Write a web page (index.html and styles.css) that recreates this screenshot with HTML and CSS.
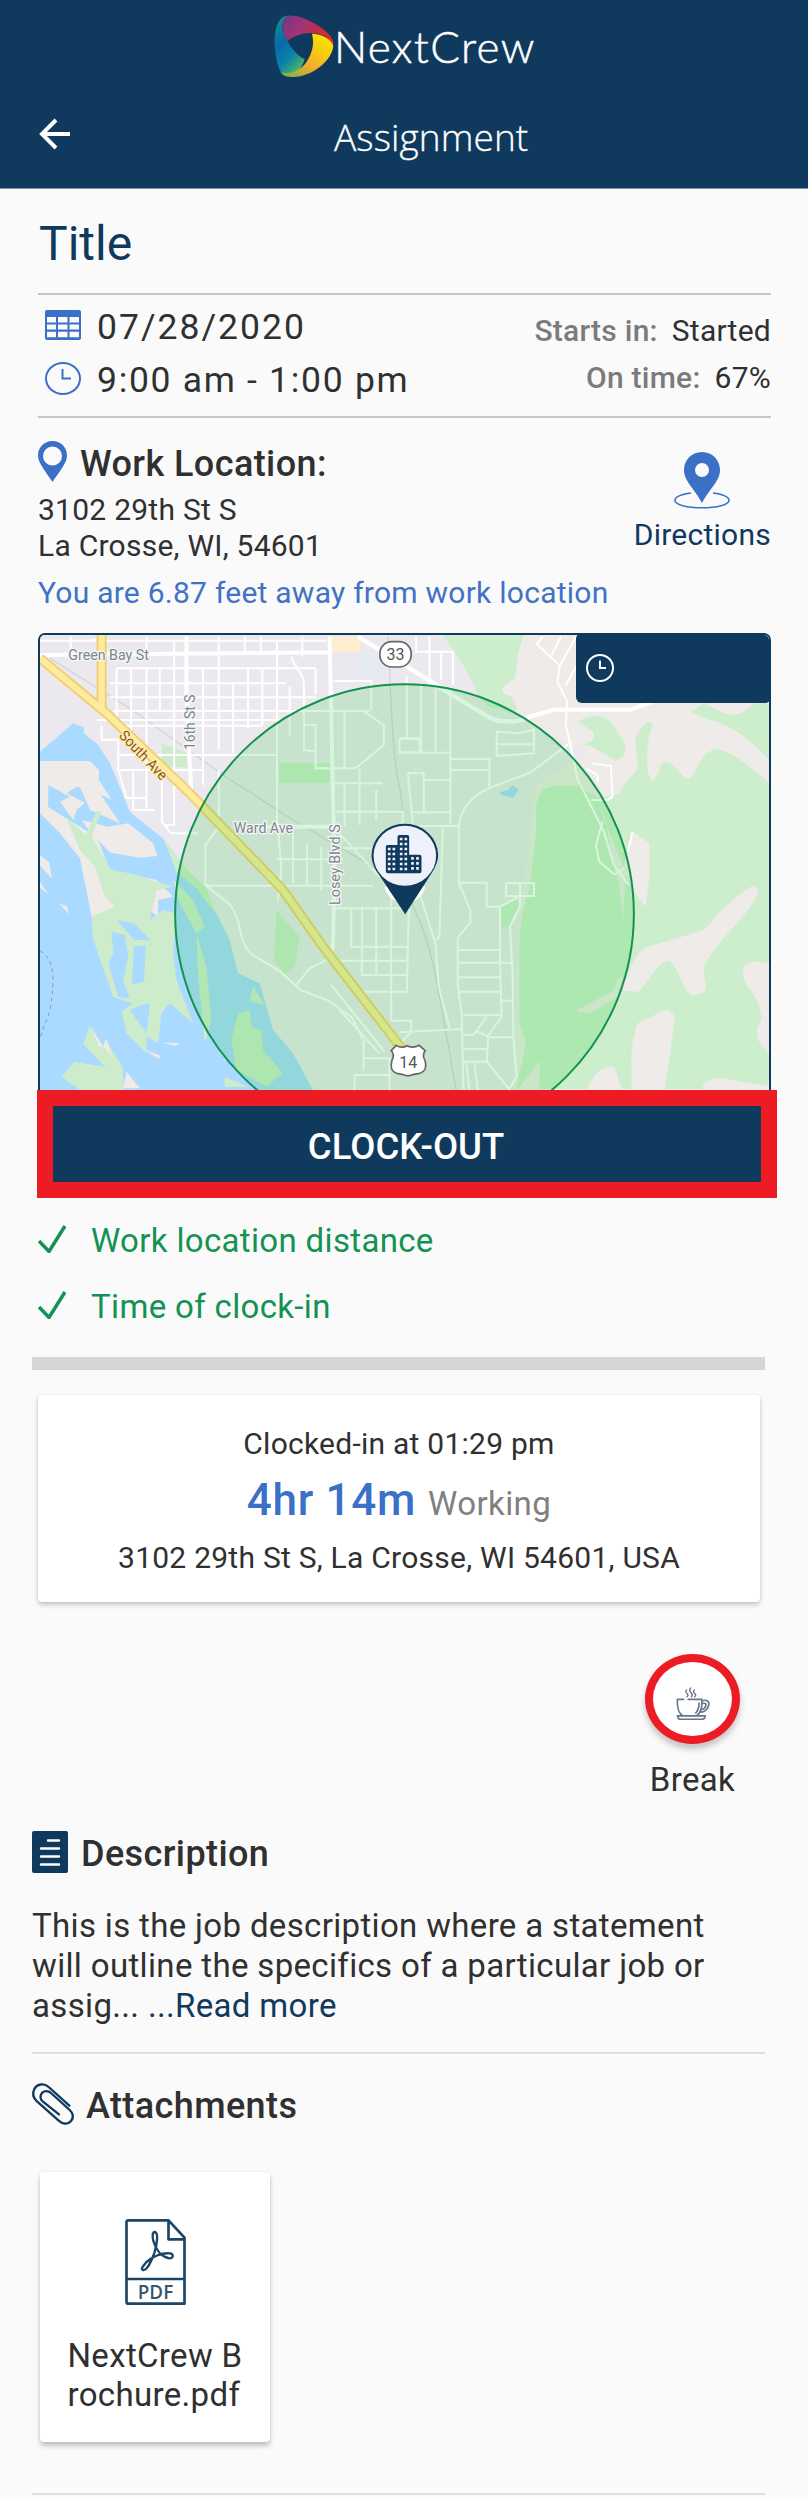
FILE: index.html
```
<!DOCTYPE html>
<html lang="en">
<head>
<meta charset="utf-8">
<title>NextCrew - Assignment</title>
<link rel="stylesheet" href="styles.css">
</head>
<body>
<header class="header">
  <div class="brand">
    <svg class="brand-mark" viewBox="0 0 180 186">
      <defs>
        <linearGradient id="teal" x1="0" y1="0" x2="0.5" y2="1"><stop offset="0" stop-color="#149b86"/><stop offset=".45" stop-color="#0868ad"/><stop offset=".75" stop-color="#0a83a6"/><stop offset="1" stop-color="#45b06b"/></linearGradient>
        <linearGradient id="plum" x1="0" y1="0" x2="1" y2=".4"><stop offset="0" stop-color="#6d3a8c"/><stop offset=".5" stop-color="#a8326f"/><stop offset="1" stop-color="#d92a2c"/></linearGradient>
        <linearGradient id="sun" x1=".8" y1="0" x2="0" y2="1"><stop offset="0" stop-color="#ffe400"/><stop offset=".6" stop-color="#f0ac2c"/><stop offset="1" stop-color="#67b35a"/></linearGradient>
      </defs>
      <path fill="url(#teal)" d="M42 2C12 2 2 42 2 82c0 42 10 75 20 92 8 12 28 12 42 9 10-12 22-30 28-50C60 118 36 78 24 40 26 20 30 8 42 2z"/>
      <path fill="url(#plum)" d="M42 2c38-6 118 38 134 72 3 8 2 12 0 18C160 50 90 40 40 78 24 50 16 12 42 2z"/>
      <path fill="url(#sun)" d="M114 56c30 0 58 18 64 36-4 48-70 96-126 94-16 0-26-6-32-14 40 10 72-16 84-42 14-26 16-50 10-74z"/>
    </svg>
    <span class="brand-name">NextCrew</span>
  </div>
  <div class="titlebar">
    <svg class="back" viewBox="0 0 32 32"><path d="M31 16H3M17 2L3 16l14 14"/></svg>
    <span class="screen-name">Assignment</span>
  </div>
</header>

<main class="content">
  <h1 class="job-title">Title</h1>

  <section class="schedule">
    <div class="when">
      <div class="when-row">
        <svg class="cal" viewBox="0 0 36 30"><rect width="36" height="30" rx="2" fill="#3a70c6"/><g fill="#fafafa"><path d="M2 7h9v5.500H2zM13 7h9.500v5.500H13zM24.500 7h9.500v5.500h-9.500zM2 14.500h9v5H2zM13 14.500h9.500v5H13zM24.500 14.500h9.500v5h-9.500zM2 21.800h9v5.500H2zM13 21.800h9.500v5.500H13zM24.500 21.800h9.500v5.500h-9.500z"/></g></svg>
        <span class="date">07/28/2020</span>
      </div>
      <div class="when-row">
        <svg class="clock" viewBox="0 0 36 33"><ellipse cx="18" cy="16.500" rx="17" ry="15.500"/><path d="M17.500 7v9.500H26"/></svg>
        <span class="hours">9:00 am - 1:00 pm</span>
      </div>
    </div>
    <div class="status">
      <div class="status-row"><b>Starts in:</b><span>Started</span></div>
      <div class="status-row"><b>On time:</b><span>67%</span></div>
    </div>
  </section>

  <section class="location">
    <div class="place">
      <div class="place-head">
        <svg class="pin" viewBox="0 0 29 41"><path fill="#3a70c6" fill-rule="evenodd" d="M14.500 0C6 0 0 6.500 0 14.500 0 22 8 31 14.500 41 21 31 29 22 29 14.500 29 6.500 23 0 14.500 0zm0 5.500a9.500 9.500 0 1 1 0 19 9.500 9.500 0 0 1 0-19z"/></svg>
        <h2>Work Location:</h2>
      </div>
      <p class="address">3102 29th St S<br>La Crosse, WI, 54601</p>
    </div>
    <div class="directions">
      <svg viewBox="0 0 56 57"><path fill="none" stroke="#3a70c6" stroke-width="1.600" d="M17 41C7 42.300 1 45 1 48.500c0 4.200 12 7.300 27 7.300s27-3.100 27-7.300c0-3.500-6-6.200-16-7.500"/><path fill="#3a70c6" fill-rule="evenodd" d="M28 0C17 0 10 8.500 10 18c0 11 10 18 18 33 8-15 18-22 18-33C46 8.500 39 0 28 0zm0 11a7 7 0 1 1 0 14 7 7 0 0 1 0-14z"/></svg>
      <span>Directions</span>
    </div>
  </section>
  <p class="distance">You are 6.87 feet away from work location</p>

  <div class="map">
    <svg class="map-canvas" viewBox="30 45 2190 1365" preserveAspectRatio="none">
      <rect x="30" y="45" width="2190" height="1365" fill="#ece9ee"/>
      <!-- river and backwaters -->
      <path fill="#aadaff" d="M30 395L130 310 162 322 162 340 205 375 240 430 300 575 360 625 400 655 450 730 510 790 550 860 600 960 625 1060 690 1090 730 1230 790 1300 850 1410H30z"/>
      <path fill="#efebe8" d="M30 423H180L207 450 206 478 245 540 205 520 140 500 110 520 165 548 140 570 130 600 90 545 120 530 55 495 54 560 108 595 200 650 240 750 380 780 430 830 385 840 385 890 330 850 310 815 300 880 350 940 330 955 255 895 245 1030 275 1130 310 1150 250 1130 205 990 185 890 150 715 90 640 30 580z"/>
      <path fill="#efebe8" d="M155 600l80 20 60-10 75 60 12 38-50 5-90-15-60-60zM150 500l60 20 60 90-90-40zM30 705l28 22 8 50-36-40zM88 850l24 10 4 22zM30 785l25 38-25-20z"/>
      <path fill="#cdeccb" d="M108 590L168 645 200 572 214 575 185 650 220 710 245 750 300 760 380 785 430 800 380 810 360 900 400 870 440 880 430 1000 440 1080 490 1210 420 1150 395 1180 385 1270 350 1250 360 1150 320 1160 300 1170 350 1240 350 1300 290 1240 275 1175 310 1150 250 1130 190 960 185 890 255 860 225 830 195 740 150 690z"/>
      <path fill="#aadaff" d="M245 935l40 10 10 60-15 80 20 50-35-5-30-100 15-30zM312 980l36-4-6 110-36 6zM262 900l50 10 50 50-50 0z"/>
      <path fill="#cdeccb" d="M160 1272l18-52 40 60 10-20 50 80 4 70H150l-56-40 40-45 90 15zM585 1370l70 30h-70zM605 1260l20-80 35-10 5 50 30 10 5 60 60 70-50 40-90-50z"/>
      <path fill="#efebe8" d="M180 1215l40 65-12 0zM228 1255l20 55-28-30zM290 1355l40 50h-50zM345 1290l50 18-10 8zM395 1268l54 2-10 8z"/>
      <path fill="#cdeccb" d="M395 370l78 30-2 42-74-2zM748 430h152v58H748zM740 870l70 80-15 90-30 22-32-40zM400 655l70 90 60 60 30 80-60-80-60-50z"/>
      <path fill="#d2ecd0" d="M430 780l60 60 35 80-25 20-50-90zM500 940l30 100 15 160-20 70-20-200zM670 1100l35 55-45-10z"/>
      <path fill="#fdeecd" d="M908 50h84v46h-84z"/><path fill="#e6ebf1" d="M980 98h100v80H980z"/>

      <!-- eastern hills -->
      <g transform="translate(1110 0)">
        <path fill="#efebe8" d="M380 45h730v1365H340l20-500 50-420 170-90-200-90-160-120z"/>
        <path fill="#cdeecd" d="M130 45h245c-30 70-20 110-28 130-30 20-50 30-30 50 30 0 30 30 36 45l-10 10-75-20-30-25c-20-60-50-110-108-190z"/>
        <path fill="#cdeecd" d="M535 305c50-30 80-15 100 0l40 60c10 40-5 50-25 58l-50-30c-30-20-40-20-65-10l30-14c20-5 20-20 16-35zM875 275l40-25 60 30c40 10 60 0 90-30h55v180l-60-60c-30-30-80-60-130-70z"/>
        <path fill="#cdeecd" d="M440 505c60-20 120 0 160 30l60-15c30-60 50-50 56-85l-8-80c20-40 40-60 52-40-20 50-15 100-15 140l15 32 20-35c5-20 5-30 30-25 30 20 40 50 60 50 25-20 35-90 90-90 60 20 110 70 150 100v360c10 170 0 500-2 560H420l10-900z"/>
        <path fill="#efebe8" d="M660 1110c30-40 40-100 75-125 60-20 100-30 180-55 40-40 40-60 140-130 20-2 25 10 20 25-40 80-120 130-160 215-5 30 10 50 4 70-10 14-30 14-44 14-30-20-40-100-70-100-40 10-50 60-90 92zM696 1410c5-60-10-120 20-200l86-42c20 10 25 20 25 32l-30 210zM565 1410c20-60 50-70 80-70 10 30 15 40 25 70zM912 1395c30-30 60-20 90-15l110 20v10H912zM1110 1030c-50-10-80-5-78 30 0 50 50 50 56 140-30 40-10 70 22 100zM535 1175l5-30 130-75-15 60-80 50zM700 635l50 35 2 90-12 100-40-50-30-60zM600 560l80 200-10 170-50-330z"/>
        <path fill="#cdeecd" d="M410 560c10-60 40-70 140-60l60 100 50 200 15 130 20 30-50 150-110 60-180 240H350l30-140-20-60c2-200-10-300 30-400l20-170zM300 865l35-30 26 10-32 76h-30z"/>
        <path fill="#aadaff" d="M303 515l25-5 10-15 20 12-16 27-38-10z"/>
      </g>

      <!-- railways -->
      <g fill="none" stroke="#d3d5d6" stroke-width="4"><path d="M60 115l240 150 280 200 210 135 240 140 80 60M1075 50c10 150 10 350 35 450 20 90 10 300 50 380 50 100 70 250 120 530"/></g>

      <!-- local streets -->
      <g fill="none" stroke="#fff" stroke-width="6">
        <path d="M30 62h860M122 50v40M180 60h30M260 145h598M240 190h530M240 232h620M250 273h770M200 300h560M260 317h440M260 145v180M304 145v215M350 145v230M390 145v130M433 60v380M520 145v290M567 50v340M610 190v210M655 145v180M698 145v170M742 60v560M780 200v150M350 50v50M645 50v50M693 50v50M818 50v60"/>
        <path d="M215 317v42h50v90l25 85h60M265 405h480M350 400v165M396 440v165l28 35h80M310 450v120h65M433 440v175h-30M270 450h250M520 435v60M567 450v170l-40 55v120l75 60c40 60 20 100 60 145l90 55 60 55 85 32 70 50 35 70v90"/>
        <path d="M785 110c10 40 35 40 38 80v200l35 5M858 145v80M825 315h33v130h120l85-70v-60l-60-40M915 183h110v90M945 270v175M990 445v170M915 490h145M945 490v130M920 575h200v110h-180M1040 510v90M1110 357h60v40h-60z"/>
        <path d="M745 620l10 130-10 90M530 797h500M740 718h200M790 640v150M832 670v130M875 680v130M920 630l130 140M918 865h220M965 865v115h170M997 860v205h135M1040 860v210M1085 770v430M1138 860l-6 255h-130M930 1022h200M800 1095l40-50 60-30M905 1095l160 200M930 1170l120 130M1000 1315h80v95M975 1410v-45h110M1085 1202h60v35l-60 60"/>
      </g>
      <g transform="translate(1110 0)" fill="none" stroke="#fff" stroke-width="6">
        <path d="M50 50v45h110v100M90 50v150M125 95v85M22 170v185M65 190v205M108 205v190M153 200v415M0 355h65M0 398h150M155 417h115v85M155 450h115M25 460h48v117M25 460l15 155M73 480h80M0 618h178M38 577h115M130 620l-10 330-10 10M178 618v170l35 85v35l-38 45v140l12 90 5 225M178 618c10-60 40-90 95-115l120-45 120-90M292 335l70 5 42-12v72l-112 8zM292 373h112M178 788h84v72h40l60-32M320 790h84v38h-84zM362 790v70l-30 60 8 150 2 180 10 120-25 40M302 860v170l5 160-40 55-5 80 70 85M178 990h124M178 1028h160M178 1072h126M183 1115h122M307 1142h33M192 1185h115M192 1245h30l40-55M230 1232l40 20h70M192 1287h68M192 1325h68M200 1325l10 85M225 1325l10 85M0 1237l190-10M60 820l48 150 10 130 32 125"/>
        <path d="M430 50l-18 22 70 65 48-87M485 50l-30 60M482 135l-8 50 30 60-5 70 15 60 20 100 80 160 30 100 45 60M530 140l-30 55M610 605l-20 70 10 50 45 38 30-18M580 430l55 8 5 92-15 10h-50M700 635l-14 60M560 445l35 20v20"/>
      </g>
      <g fill="none" stroke="#fff" stroke-width="12"><path d="M30 105l870-8M470 50v180l15 300M900 50l15 700-5 235-10 8M620 620h300"/></g>
      <path fill="none" stroke="#fff" stroke-width="13" d="M985 50l180 110 120 75 90 55c30 20 90 18 120 2l80-23h230l80-30"/>

      <!-- highways -->
      <g fill="none" stroke-linejoin="round"><path stroke="#f5cc6c" stroke-width="30" d="M215 45v225M30 115l200 165 250 240 280 290 120 170 240 310 30 60"/><path stroke="#fdeca0" stroke-width="19" d="M215 45v225M30 115l200 165 250 240 280 290 120 170 240 310 30 60"/></g>
      <path fill="none" stroke="#8593a0" stroke-width="2.500" stroke-dasharray="12 10" d="M30 992c50 30 40 100 34 150-4 50-24 70-34 115"/>

      <!-- geofence -->
      <circle cx="1125" cy="882" r="689" fill="#18ca2a" fill-opacity=".17" stroke="#149253" stroke-width="6"/>

      <g class="road-labels">
        <text x="115" y="119" textLength="242" lengthAdjust="spacingAndGlyphs">Green Bay St</text>
        <text x="612" y="640" textLength="178" lengthAdjust="spacingAndGlyphs">Ward Ave</text>
        <text transform="translate(495 390) rotate(-90)" textLength="166" lengthAdjust="spacingAndGlyphs">16th St S</text>
        <text transform="translate(931 855) rotate(-90)" textLength="242" lengthAdjust="spacingAndGlyphs">Losey Blvd S</text>
        <text class="major" transform="translate(265 349) rotate(46)" textLength="186" lengthAdjust="spacingAndGlyphs">South Ave</text>
      </g>
      <rect x="1051" y="65" width="94" height="76" rx="36" fill="#fff" stroke="#676767" stroke-width="5"/>
      <text class="shield" x="1098" y="120">33</text>
      <path fill="#fff" stroke="#676767" stroke-width="5" d="M1100 1276q16 10 33 1 18 9 36-1l18 16q-10 14 0 30 8 30-16 38-18 2-36 8-18-6-34-8-22-8-14-38 10-18-2-30z"/>
      <text class="shield" x="1136" y="1343">14</text>

      <!-- job site pin -->
      <path fill="#fff" d="M1065 800a62 60 0 0 0 122 0z"/>
      <path fill="#103a5d" d="M1127 883l-76-115c-15-20-25-40-25-62a100 95 0 0 1 200 0c0 22-12 42-25 62z"/>
      <ellipse cx="1126" cy="707" rx="94" ry="90" fill="#eef1fa"/>
      <path fill="#103a5d" d="M1069 680q0-5 5-5h30v-24q0-6 6-6h24q5 0 5 6v53h31q6 0 6 6v44q0 6-6 6h-95q-6 0-6-6z"/>
      <g fill="none" stroke="#eef1fa" stroke-width="8" stroke-dasharray="8 7"><path d="M1079 683v70M1093 683v70M1115 653v100M1129 653v100M1149 711v44M1164 711v44"/></g>
    </svg>
    <div class="timer"><svg viewBox="0 0 30 30"><circle cx="15" cy="15" r="13"/><path d="M15 7.500V15h6"/></svg></div>
  </div>
  <button class="clock-out">CLOCK-OUT</button>

  <ul class="checks">
    <li><svg viewBox="0 0 28 28"><path d="M1 16l10 10.500L27 1"/></svg><span>Work location distance</span></li>
    <li><svg viewBox="0 0 28 28"><path d="M1 16l10 10.500L27 1"/></svg><span>Time of clock-in</span></li>
  </ul>

  <div class="lower">
    <div class="bar"></div>
    <section class="punch">
      <p>Clocked-in at 01:29 pm</p>
      <p class="elapsed"><strong>4hr 14m</strong><span>Working</span></p>
      <p>3102 29th St S, La Crosse, WI 54601, USA</p>
    </section>

    <div class="break">
      <div class="break-button">
        <svg viewBox="0 0 100 98"><g fill="none" stroke="#66768c" stroke-width="5" stroke-linecap="round"><path d="M22 37H4c-2 22 4 42 16 49h40c12-8 18-27 16-49H36M77 41c12-4 22 0 20 12s-12 22-26 22M78 49c8-2 12 0 10 7s-6 10-13 11M68 48c0 12-4 22-10 29M4 86h82q-1 10-9 10H13q-8 0-9-10z"/><path stroke-width="4" d="M31 9q-5 5 1 10t0 10M43 3q-6 7 1 13t1 13M54 9q-5 5 1 10t0 10"/></g></svg>
      </div>
      <span>Break</span>
    </div>

    <div class="section-head">
      <svg class="doc" viewBox="0 0 36 42"><rect width="36" height="42" rx="2" fill="#103a5d"/><path stroke="#fff" stroke-width="2.400" stroke-linecap="round" d="M16 9.500h11M9 17.500h18M9 25.500h18M9 33.500h18"/></svg>
      <h2>Description</h2>
    </div>
    <p class="description">This is the job description where a statement<br>will outline the specifics of a particular job or<br>assig... <a>...Read more</a></p>

    <section class="attachments">
      <div class="section-head attach-head">
        <svg class="clip" viewBox="0 0 126 126"><path fill="none" stroke="#103a5d" stroke-width="7" stroke-linecap="round" d="M112 68L50 12C34-2 14 4 7 18c-7 14-3 27 8 37l65 58c14 13 29 11 37 1s8-22-4-33L57 30c-8-8-20-7-26-1-7 7-8 18 1 26l49 39"/></svg>
        <h2>Attachments</h2>
      </div>
      <div class="file">
        <svg viewBox="0 0 182 258"><g fill="none" stroke="#1d4566" stroke-width="8"><path d="M10 4h120l48 52v198H10q-6 0-6-6V10q0-6 6-6zM130 4v57h48M4 180h174" stroke-linejoin="round"/><path stroke-width="7" d="M89 39c-8 0-8 14-4 28 8 28 26 47 47 51 14 0 14-14 2-15-25-2-54 10-72 28-10 12-16 20-8 22 10 2 24-24 34-52 7-24 13-60 1-62z"/></g><text x="91" y="241" text-anchor="middle" textLength="106" lengthAdjust="spacingAndGlyphs">PDF</text></svg>
        <span>NextCrew B<br>rochure.pdf</span>
      </div>
    </section>
  </div>
</main>
</body>
</html>
```
FILE: styles.css
```
* { box-sizing: border-box; }
body { margin: 0; background: #fafafa; color: #303030; font-family: Roboto, "Liberation Sans", sans-serif; }
h1, h2, p, ul { margin: 0; padding: 0; font-weight: 400; }
svg { display: block; flex: none; }

.header { height: 189px; background: #103a5d; border-bottom: 1px solid #7e94a8; color: #fff; }
.brand { display: flex; height: 92px; padding: 15px 0 0 274px; }
.brand-mark { width: 60px; height: 62px; }
.brand-name { margin-left: 0; font: 300 44px/62px Lato, sans-serif; letter-spacing: 1.3px; -webkit-text-stroke: .5px #fff; white-space: nowrap; }
.titlebar { display: flex; height: 96px; padding-left: 39px; }
.back { width: 32px; height: 32px; margin-top: 26px; fill: none; stroke: #fff; stroke-width: 4; }
.screen-name { margin-left: 263px; font: 300 37px/90px "Open Sans", sans-serif; letter-spacing: .1px; -webkit-text-stroke: .3px #fff; }

.content { padding: 0 37px 0 38px; }
.job-title { height: 106px; padding: 4px 0 0 1px; border-bottom: 2px solid #c6c6c6; color: #103a5d; font-size: 48px; line-height: 101px; }

.schedule { display: flex; justify-content: space-between; height: 123px; border-bottom: 2px solid #c6c6c6; }
.when { padding: 5px 0 0 7px; }
.when-row { display: flex; align-items: center; gap: 16px; height: 53.5px; font-size: 35.5px; white-space: nowrap; }
.date { letter-spacing: 2px; }
.hours { letter-spacing: 1.7px; }
.cal { width: 36px; height: 30px; margin-top: -4px; }
.clock { width: 36px; height: 33px; margin-top: -4px; fill: none; stroke: #3a70c6; stroke-width: 2; }
.status { padding-top: 11.5px; font-size: 30px; line-height: 47px; letter-spacing: .25px; }
.status-row { display: flex; justify-content: flex-end; gap: 14px; }
.status b { color: #7b7b7b; font-weight: 500; }

.location { display: flex; justify-content: space-between; height: 157px; }
.place-head { display: flex; align-items: center; gap: 13px; height: 73.5px; padding-top: 18px; }
h2 { font-size: 36px; font-weight: 500; line-height: 46px; letter-spacing: .4px; }
.pin { width: 29px; height: 41px; margin-top: -5px; }
.address { font-size: 30px; line-height: 36.3px; letter-spacing: .25px; }
.directions { display: flex; flex-direction: column; align-items: center; padding-top: 33.5px; color: #103a5d; font-size: 30px; line-height: 52px; letter-spacing: .25px; }
.directions svg { width: 56px; height: 57px; }
.distance { height: 58px; color: #4272c3; font-size: 30px; line-height: 36px; letter-spacing: .25px; }

.map { position: relative; height: 457px; border: 2px solid #103a5d; border-bottom: 0; border-radius: 7px 7px 0 0; overflow: hidden; }
.map-canvas { width: 100%; height: 455px; }
.timer { position: absolute; top: -2px; right: -2px; width: 195px; height: 70px; padding: 20px 0 0 9px; border-radius: 6px; background: #103a5d; }
.timer svg { width: 30px; height: 30px; fill: none; stroke: #fff; stroke-width: 2; }
.road-labels text { fill: #7b868d; stroke: #f5f6f6; stroke-width: 8px; paint-order: stroke; stroke-linejoin: round; font-size: 44px; }
.road-labels .major { fill: #8a5320; stroke: #fdeeb0; }
.shield { fill: #555; font-size: 48px; text-anchor: middle; }

.clock-out { display: block; width: 740px; height: 108px; margin: 0 0 0 -1px; padding: 5px 2px 0 0; border: 16px solid #ed1c24; background: #103a5d; color: #fff; font: 500 36.5px/71px Roboto, sans-serif; }
.checks { padding-top: 9px; list-style: none; color: #149253; font-size: 33px; letter-spacing: .34px; }
.checks li { display: flex; align-items: center; gap: 25px; height: 66px; }
.checks svg { width: 28px; height: 28px; margin-top: -3px; fill: none; stroke: #149253; stroke-width: 3.5; }

.lower { margin: 18px 0 0 -6px; width: 733px; }
.bar { height: 13px; background: #d5d5d5; }
.punch { width: 722px; height: 207px; margin: 25px 0 0 6px; padding-top: 20px; border-radius: 4px; background: #fff; box-shadow: 0 3px 5px rgba(0,0,0,.2), 0 0 3px rgba(0,0,0,.08); font-size: 30px; line-height: 57px; letter-spacing: .25px; text-align: center; }
.elapsed { display: flex; justify-content: center; align-items: baseline; gap: 12px; height: 57px; }
.elapsed strong { color: #3a70c6; font-size: 44px; font-weight: 500; letter-spacing: .7px; }
.elapsed span { color: #808080; font-size: 33px; letter-spacing: .4px; }

.break { display: flex; flex-direction: column; align-items: center; width: 95px; margin: 52px 0 31px 613px; font-size: 33px; line-height: 40px; letter-spacing: .34px; }
.break-button { display: flex; justify-content: center; width: 95px; height: 90px; margin-bottom: 16px; padding-top: 25px; border: 8px solid #ed1c24; border-radius: 50%; background: #fff; box-shadow: 0 5px 6px rgba(0,0,0,.22); }
.break-button svg { width: 34px; height: 33px; }

.section-head { display: flex; align-items: center; height: 45px; gap: 13px; }
.doc { width: 36px; height: 42px; margin-top: -3px; }
.description { margin-top: 30px; font-size: 33px; line-height: 40px; letter-spacing: .34px; white-space: nowrap; }
.description a { color: #103a5d; }
.attachments { margin-top: 26px; height: 443px; border-top: 2px solid #dedede; border-bottom: 2px solid #dedede; }
.attach-head { margin-top: 29px; gap: 12px; }
.clip { width: 42px; height: 42px; margin-top: -4px; overflow: visible; }
.file { display: flex; flex-direction: column; align-items: center; width: 230px; height: 270px; margin: 44px 0 0 8px; padding-top: 47px; border-radius: 4px; background: #fff; box-shadow: 0 4px 5px rgba(0,0,0,.22), 0 0 3px rgba(0,0,0,.08); font-size: 33px; line-height: 39px; letter-spacing: .34px; }
.file svg { width: 61px; height: 86px; margin: 0 0 31px 1px; }
.file text { fill: #36566f; font: 600 60px "Open Sans", sans-serif; letter-spacing: 0; }
```
